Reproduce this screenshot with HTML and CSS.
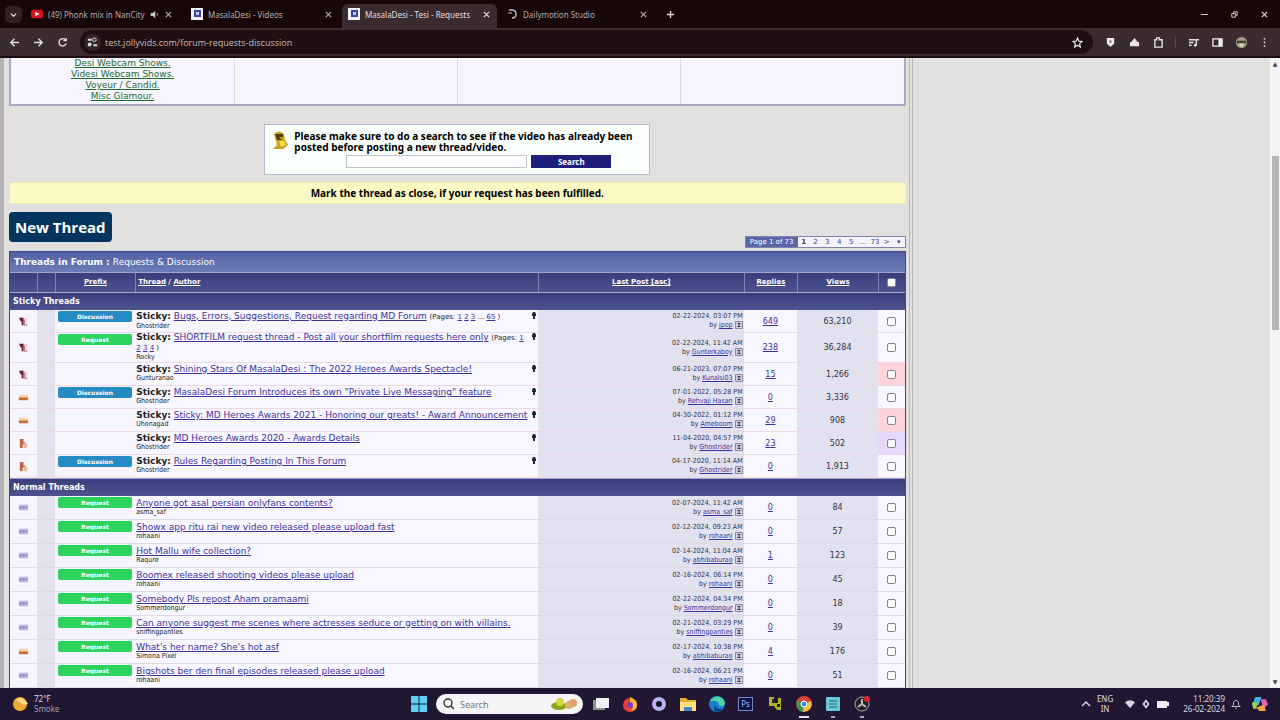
FILE: index.html
```html
<!DOCTYPE html>
<html lang="en">
<head>
    <meta charset="UTF-8">
    <meta name="viewport" content="width=device-width, initial-scale=1.0">
    <title>MasalaDesi - Tesi - Requests &amp; Discussion</title>
    <link rel="stylesheet" href="styles.css">
</head>
<body>

<!-- shared icons -->
<svg class="defs" aria-hidden="true">
    <symbol id="i-close" viewBox="0 0 10 10"><path d="M2 2l6 6M8 2l-6 6" stroke="currentColor" stroke-width="1.3"/></symbol>
    <symbol id="i-site" viewBox="0 0 12 12"><path fill="#f4f4ff" d="M0 0h12v12H0z"/><path fill="#3d45a0" d="M3 2h7v7H3z"/><path fill="#c9ccf0" d="M5 4h3v3H5z"/></symbol>
    <symbol id="i-hot" viewBox="0 0 12 12"><path fill="#f3d3da" d="M4 2h6v9H4z"/><path fill="#6d1f36" d="M1 2h5v4H4H3z"/><path fill="#6d1f36" d="M4 5h2v5H4z"/><path fill="none" stroke="#b06a80" d="M7 4v6h3"/></symbol>
    <symbol id="i-locked" viewBox="0 0 12 12"><path fill="#f5d3a4" d="M1 3h10v4H1z"/><path fill="#c96a35" d="M1 6h10v3H1z"/></symbol>
    <symbol id="i-old" viewBox="0 0 12 12"><path fill="#b9664c" d="M2 1h4v4h2v2H5v4H2z"/><path fill="#e8b79c" d="M6 6h4v5H6z"/></symbol>
    <symbol id="i-new" viewBox="0 0 12 12"><path fill="#bfb6e2" d="M1 3h10v6H1z"/><path stroke="#9589c8" d="M3 4v4M6 4v4M9 4v4M1 6h9"/></symbol>
    <symbol id="i-pin" viewBox="0 0 6 8"><path fill="#26243c" d="M2 0h2l1 2v2H4v3H2V4H1V2z"/></symbol>
    <symbol id="i-go" viewBox="0 0 8 8"><path fill="#d3d0e4" stroke="#8a87a6" d="M.5.5h7v7h-7z"/><path fill="#3c3958" d="M2 2h4L4 4l2 2H2l2-2z"/></symbol>
</svg>

<header class="browser">
    <div class="tabs">
        <button class="tab-list" aria-label="Search tabs"><svg viewBox="0 0 10 10"><path d="M2 4l3 3 3-3" fill="none" stroke="#ddd" stroke-width="1.4"/></svg></button>
        <div class="tab">
            <svg class="fav" viewBox="0 0 14 12"><rect y="1" width="14" height="10" rx="3" fill="#d5121d"/><path fill="#fff" d="M5 3.500l5 2.500-5 2.500z"/></svg>
            <span>(49) Phonk mix in NanCity</span>
            <svg class="x" viewBox="0 0 12 12"><path fill="#ccc" d="M1 4h3l3-3v10L4 8H1z"/><path d="M9 4q2 2 0 4" stroke="#ccc" fill="none"/></svg>
            <svg class="x"><use href="#i-close"/></svg>
        </div>
        <div class="tab">
            <svg class="fav"><use href="#i-site"/></svg>
            <span>MasalaDesi - Videos</span>
            <svg class="x"><use href="#i-close"/></svg>
        </div>
        <div class="tab active">
            <svg class="fav"><use href="#i-site"/></svg>
            <span>MasalaDesi - Tesi - Requests</span>
            <svg class="x"><use href="#i-close"/></svg>
        </div>
        <div class="tab">
            <svg class="fav" viewBox="0 0 12 12"><path d="M3 2h3q4 0 4 4t-4 4" fill="none" stroke="#bbb" stroke-width="1.400"/><path d="M2 5h4" stroke="#bbb"/></svg>
            <span>Dailymotion Studio</span>
            <svg class="x"><use href="#i-close"/></svg>
        </div>
        <button class="new-tab" aria-label="New tab"><svg viewBox="0 0 10 10"><path d="M5 1v8M1 5h8" stroke="#ddd" stroke-width="1.500"/></svg></button>
        <div class="window-buttons">
            <button aria-label="Minimize"><svg viewBox="0 0 10 10"><path d="M1 5h8" stroke="#ddd"/></svg></button>
            <button aria-label="Restore"><svg viewBox="0 0 10 10"><path d="M2 4h4v4H2zM4 4V2h4v4H6" fill="none" stroke="#ddd"/></svg></button>
            <button aria-label="Close"><svg><use href="#i-close"/></svg></button>
        </div>
    </div>
    <div class="toolbar">
        <button aria-label="Back"><svg viewBox="0 0 12 12"><path d="M11 6H2M6 2L2 6l4 4" fill="none" stroke="#ddd" stroke-width="1.500"/></svg></button>
        <button aria-label="Forward"><svg viewBox="0 0 12 12"><path d="M1 6h9M6 2l4 4-4 4" fill="none" stroke="#ddd" stroke-width="1.500"/></svg></button>
        <button aria-label="Reload"><svg viewBox="0 0 12 12"><path d="M10 7a4 4 0 1 1-1-4M10 1v3H7" fill="none" stroke="#ddd" stroke-width="1.500"/></svg></button>
        <div class="address">
            <span class="site-info"><svg viewBox="0 0 12 12"><path d="M1 3h4M7 9h4M1 9h3" stroke="#ddd" stroke-width="2"/><circle cx="8" cy="3" r="2" fill="none" stroke="#ddd"/><circle cx="3" cy="8" r="2" fill="#ddd"/></svg></span>
            <input type="text" aria-label="Address" value="test.jollyvids.com/forum-requests-discussion">
            <svg viewBox="0 0 12 12"><path d="M6 1l1.500 3.500 3.500.3-2.700 2.400.9 3.800L6 9l-3.200 2 .9-3.800L1 4.800l3.500-.3z" fill="none" stroke="#eee" stroke-width="1.200"/></svg>
        </div>
        <button aria-label="Shield"><svg viewBox="0 0 12 12"><path fill="#f2eeee" d="M2 1h8v6L6 11 2 7z"/><circle cx="6" cy="5" r="1.500" fill="#888"/></svg></button>
        <button aria-label="Extension"><svg viewBox="0 0 12 12"><path fill="#e9e3e3" d="M1 6l2-1 3-4 3 4 2 1v4H1z"/></svg></button>
        <button aria-label="Extensions"><svg viewBox="0 0 12 12"><path d="M2 3h2V1h3v2h3v8H2z" fill="none" stroke="#e9e3e3" stroke-width="1.500"/></svg></button>
        <span class="divider"></span>
        <button aria-label="Media"><svg viewBox="0 0 12 12"><path d="M1 3h7M1 6h5M1 9h3M9 9V3h3" fill="none" stroke="#e9e3e3" stroke-width="1.500"/><circle cx="8" cy="9" r="1.500" fill="#e9e3e3"/></svg></button>
        <button aria-label="Side panel"><svg viewBox="0 0 12 12"><path d="M1 2h10v8H1z" fill="none" stroke="#eee" stroke-width="1.400"/><path fill="#eee" d="M7 2h4v8H7z"/></svg></button>
        <button aria-label="Profile"><svg viewBox="0 0 12 12"><circle cx="6" cy="6" r="6" fill="#a5a08c"/><path fill="#4a423a" d="M1 4h10v3H1z"/><path fill="#e3d5bd" d="M3 7h6l-2 4H5z"/></svg></button>
        <button class="slim" aria-label="Menu"><svg viewBox="0 0 12 12"><path d="M6 1v2M6 5v2M6 9v2" stroke="#ccc" stroke-width="1.600"/></svg></button>
    </div>
</header>

<div class="viewport">
<main class="forum">

    <div class="categories">
        <div class="category-links">
            <a href="#">Desi Webcam Shows.</a>
            <a href="#">Videsi Webcam Shows.</a>
            <a href="#">Voyeur / Candid.</a>
            <a href="#">Misc Glamour.</a>
        </div>
        <div></div>
        <div></div>
        <div></div>
    </div>

    <form class="search-box">
        <svg viewBox="0 0 16 18"><path fill="#caa51c" d="M2 3q5-5 10 0l1 6 3 5-5 4H1l4-4z"/><path fill="#4d4110" d="M3 3h8v3H7l3 3H5z"/><path fill="#f6dc52" d="M7 10h5l2 4-5 2z"/></svg>
        <div>
            <label for="q">Please make sure to do a search to see if the video has already been posted before posting a new thread/video.</label>
            <div class="search-row">
                <input type="text" id="q">
                <button type="button">Search</button>
            </div>
        </div>
    </form>

    <div class="notice">Mark the thread as close, if your request has been fulfilled.</div>

    <div class="actions">
        <button class="new-thread">New Thread</button>
        <nav class="pages">
            <span>Page 1 of 73</span>
            <b>1</b>
            <a href="#">2</a>
            <a href="#">3</a>
            <a href="#">4</a>
            <a href="#">5</a>
            <i>...</i>
            <a href="#">73</a>
            <a href="#">&gt;</a>
            <a href="#" class="drop">▾</a>
        </nav>
    </div>

    <div class="threads">
    <h2>Threads in Forum : <span>Requests &amp; Discussion</span></h2>
    <table>
        <colgroup>
            <col class="c-icon"><col class="c-blank"><col class="c-prefix"><col class="c-title"><col class="c-last"><col class="c-replies"><col class="c-views"><col class="c-check">
        </colgroup>
        <thead>
            <tr>
                <th></th>
                <th></th>
                <th><a href="#">Prefix</a></th>
                <th class="left"><a href="#">Thread</a> / <a href="#">Author</a></th>
                <th><a href="#">Last Post [asc]</a></th>
                <th><a href="#">Replies</a></th>
                <th><a href="#">Views</a></th>
                <th><input type="checkbox" aria-label="Select all"></th>
            </tr>
        </thead>
        <tbody class="sticky">
            <tr class="group"><th colspan="8">Sticky Threads</th></tr>
            <tr>
                <td><svg><use href="#i-hot"/></svg></td><td></td>
                <td><span class="prefix discussion">Discussion</span></td>
                <td><svg class="pin"><use href="#i-pin"/></svg><b>Sticky:</b> <a href="#">Bugs, Errors, Suggestions, Request regarding MD Forum</a> <small>(Pages: <a href="#">1</a> <a href="#">2</a> <a href="#">3</a> ... <a href="#">65</a> )</small><p>Ghostrider</p></td>
                <td>02-22-2024, 03:07 PM<p>by <a href="#">jpop</a> <svg><use href="#i-go"/></svg></p></td>
                <td><a href="#">649</a></td><td>63,210</td>
                <td><input type="checkbox" aria-label="Select thread"></td>
            </tr>
            <tr class="tall">
                <td><svg><use href="#i-hot"/></svg></td><td></td>
                <td><span class="prefix request">Request</span></td>
                <td><svg class="pin"><use href="#i-pin"/></svg><b>Sticky:</b> <a href="#">SHORTFILM request thread - Post all your shortfilm requests here only</a> <small>(Pages: <a href="#">1</a><br><a href="#">2</a> <a href="#">3</a> <a href="#">4</a> )</small><p>Rocky</p></td>
                <td>02-22-2024, 11:42 AM<p>by <a href="#">Gunterkaboy</a> <svg><use href="#i-go"/></svg></p></td>
                <td><a href="#">238</a></td><td>36,284</td>
                <td><input type="checkbox" aria-label="Select thread"></td>
            </tr>
            <tr>
                <td><svg><use href="#i-hot"/></svg></td><td></td>
                <td></td>
                <td><svg class="pin"><use href="#i-pin"/></svg><b>Sticky:</b> <a href="#">Shining Stars Of MasalaDesi : The 2022 Heroes Awards Spectacle!</a><p>Gunturanao</p></td>
                <td>06-21-2023, 07:07 PM<p>by <a href="#">Kunalsi03</a> <svg><use href="#i-go"/></svg></p></td>
                <td><a href="#">15</a></td><td>1,266</td>
                <td class="pink"><input type="checkbox" aria-label="Select thread"></td>
            </tr>
            <tr>
                <td><svg><use href="#i-locked"/></svg></td><td></td>
                <td><span class="prefix discussion">Discussion</span></td>
                <td><svg class="pin"><use href="#i-pin"/></svg><b>Sticky:</b> <a href="#">MasalaDesi Forum Introduces its own "Private Live Messaging" feature</a><p>Ghostrider</p></td>
                <td>07-01-2022, 05:28 PM<p>by <a href="#">Rehvaji Hasan</a> <svg><use href="#i-go"/></svg></p></td>
                <td><a href="#">0</a></td><td>3,336</td>
                <td><input type="checkbox" aria-label="Select thread"></td>
            </tr>
            <tr>
                <td><svg><use href="#i-locked"/></svg></td><td></td>
                <td></td>
                <td><svg class="pin"><use href="#i-pin"/></svg><b>Sticky:</b> <a href="#">Sticky: MD Heroes Awards 2021 - Honoring our greats! - Award Announcement</a><p>Uhonagad</p></td>
                <td>04-30-2022, 01:12 PM<p>by <a href="#">Ameboom</a> <svg><use href="#i-go"/></svg></p></td>
                <td><a href="#">29</a></td><td>908</td>
                <td class="pink"><input type="checkbox" aria-label="Select thread"></td>
            </tr>
            <tr>
                <td><svg><use href="#i-old"/></svg></td><td></td>
                <td></td>
                <td><svg class="pin"><use href="#i-pin"/></svg><b>Sticky:</b> <a href="#">MD Heroes Awards 2020 - Awards Details</a><p>Ghostrider</p></td>
                <td>11-04-2020, 04:57 PM<p>by <a href="#">Ghostrider</a> <svg><use href="#i-go"/></svg></p></td>
                <td><a href="#">23</a></td><td>502</td>
                <td class="violet"><input type="checkbox" aria-label="Select thread"></td>
            </tr>
            <tr>
                <td><svg><use href="#i-old"/></svg></td><td></td>
                <td><span class="prefix discussion">Discussion</span></td>
                <td><svg class="pin"><use href="#i-pin"/></svg><b>Sticky:</b> <a href="#">Rules Regarding Posting In This Forum</a><p>Ghostrider</p></td>
                <td>04-17-2020, 11:14 AM<p>by <a href="#">Ghostrider</a> <svg><use href="#i-go"/></svg></p></td>
                <td><a href="#">0</a></td><td>1,913</td>
                <td><input type="checkbox" aria-label="Select thread"></td>
            </tr>
        </tbody>
        <tbody class="normal">
            <tr class="group"><th colspan="8">Normal Threads</th></tr>
            <tr>
                <td><svg><use href="#i-new"/></svg></td><td></td>
                <td><span class="prefix request">Request</span></td>
                <td><a href="#">Anyone got asal persian onlyfans contents?</a><p>asma_saf</p></td>
                <td>02-07-2024, 11:42 AM<p>by <a href="#">asma_saf</a> <svg><use href="#i-go"/></svg></p></td>
                <td><a href="#">0</a></td><td>84</td>
                <td><input type="checkbox" aria-label="Select thread"></td>
            </tr>
            <tr>
                <td><svg><use href="#i-new"/></svg></td><td></td>
                <td><span class="prefix request">Request</span></td>
                <td><a href="#">Showx app ritu rai new video released please upload fast</a><p>rohaani</p></td>
                <td>02-12-2024, 09:23 AM<p>by <a href="#">rohaani</a> <svg><use href="#i-go"/></svg></p></td>
                <td><a href="#">0</a></td><td>57</td>
                <td><input type="checkbox" aria-label="Select thread"></td>
            </tr>
            <tr>
                <td><svg><use href="#i-new"/></svg></td><td></td>
                <td><span class="prefix request">Request</span></td>
                <td><a href="#">Hot Mallu wife collection?</a><p>Raqure</p></td>
                <td>02-14-2024, 11:04 AM<p>by <a href="#">abhibaburao</a> <svg><use href="#i-go"/></svg></p></td>
                <td><a href="#">1</a></td><td>123</td>
                <td><input type="checkbox" aria-label="Select thread"></td>
            </tr>
            <tr>
                <td><svg><use href="#i-new"/></svg></td><td></td>
                <td><span class="prefix request">Request</span></td>
                <td><a href="#">Boomex released shooting videos please upload</a><p>rohaani</p></td>
                <td>02-16-2024, 06:14 PM<p>by <a href="#">rohaani</a> <svg><use href="#i-go"/></svg></p></td>
                <td><a href="#">0</a></td><td>45</td>
                <td><input type="checkbox" aria-label="Select thread"></td>
            </tr>
            <tr>
                <td><svg><use href="#i-new"/></svg></td><td></td>
                <td><span class="prefix request">Request</span></td>
                <td><a href="#">Somebody Pls repost Aham pramaami</a><p>Sommerdongur</p></td>
                <td>02-22-2024, 04:34 PM<p>by <a href="#">Sommerdongur</a> <svg><use href="#i-go"/></svg></p></td>
                <td><a href="#">0</a></td><td>18</td>
                <td><input type="checkbox" aria-label="Select thread"></td>
            </tr>
            <tr>
                <td><svg><use href="#i-new"/></svg></td><td></td>
                <td><span class="prefix request">Request</span></td>
                <td><a href="#">Can anyone suggest me scenes where actresses seduce or getting on with villains.</a><p>sniffingpanties</p></td>
                <td>02-21-2024, 03:29 PM<p>by <a href="#">sniffingpanties</a> <svg><use href="#i-go"/></svg></p></td>
                <td><a href="#">0</a></td><td>39</td>
                <td><input type="checkbox" aria-label="Select thread"></td>
            </tr>
            <tr>
                <td><svg><use href="#i-locked"/></svg></td><td></td>
                <td><span class="prefix request">Request</span></td>
                <td><a href="#">What's her name? She's hot asf</a><p>Simona Pixel</p></td>
                <td>02-17-2024, 10:38 PM<p>by <a href="#">abhibaburao</a> <svg><use href="#i-go"/></svg></p></td>
                <td><a href="#">4</a></td><td>176</td>
                <td><input type="checkbox" aria-label="Select thread"></td>
            </tr>
            <tr>
                <td><svg><use href="#i-new"/></svg></td><td></td>
                <td><span class="prefix request">Request</span></td>
                <td><a href="#">Bigshots ber den final episodes released please upload</a><p>rohaani</p></td>
                <td>02-16-2024, 06:21 PM<p>by <a href="#">rohaani</a> <svg><use href="#i-go"/></svg></p></td>
                <td><a href="#">0</a></td><td>51</td>
                <td><input type="checkbox" aria-label="Select thread"></td>
            </tr>
        </tbody>
    </table>
    </div>

</main>
<div class="scrollbar"><span>▲</span><div class="thumb"></div><span>▼</span></div>
</div>

<footer class="taskbar">
    <div class="weather">
        <svg viewBox="0 0 16 16"><circle cx="8" cy="8" r="7" fill="#f2a931"/><path fill="#ffd98a" d="M4 4q5-4 8 0 3 1 4 4l-4 1z"/></svg>
        <div>72°F<br><span>Smoke</span></div>
    </div>
    <div class="apps">
        <button aria-label="Start"><svg viewBox="0 0 16 16"><path fill="#5fd0f5" d="M0 0h7.500v7.500H0zM8.500 0H16v7.500H8.500zM0 8.500h7.500V16H0zM8.500 8.500H16V16H8.500z"/></svg></button>
        <div class="task-search">
            <svg viewBox="0 0 12 12"><circle cx="6" cy="5" r="4" fill="none" stroke="#333" stroke-width="1.400"/><path d="M9 8l3 3" stroke="#333" stroke-width="1.400"/></svg>
            <input type="text" placeholder="Search" aria-label="Search Windows">
            <svg class="doodle" viewBox="0 0 26 14"><ellipse cx="8" cy="9" rx="8" ry="4" fill="#8fa51e"/><circle cx="9" cy="5" r="4" fill="#d4d83a"/><circle cx="18" cy="8" r="4" fill="#d9b56c"/><circle cx="22" cy="6" r="4" fill="#e6a06e"/></svg>
        </div>
        <button aria-label="Task view"><svg viewBox="0 0 16 16"><path fill="#8d8d92" d="M0 4h4v10H0zM4 12h8v2H4z"/><path fill="#f0f0f0" d="M3 2h13v10H3z"/></svg></button>
        <button aria-label="Firefox"><svg viewBox="0 0 16 16"><circle cx="8" cy="9" r="7" fill="#ea3e36"/><path fill="#ffb72c" d="M8 1q8 3 7 9-1 5-6 5 4-5-1-7z"/><circle cx="8" cy="9" r="3" fill="#7b3bd6"/></svg></button>
        <button aria-label="Browser"><svg viewBox="0 0 16 16"><circle cx="8" cy="8" r="5" fill="#15122e" stroke="#b5b4ee" stroke-width="4"/></svg></button>
        <button aria-label="Files"><svg viewBox="0 0 16 16"><path fill="#e5b330" d="M0 2h6l2 2h8v11H0z"/><path fill="#ffe27a" d="M0 6h16v9H0z"/><path fill="#3f86ce" d="M4 11h8v4H4z"/></svg></button>
        <button aria-label="Edge"><svg viewBox="0 0 16 16"><circle cx="8" cy="8" r="8" fill="#1a7fd0"/><path fill="#4fd6a0" d="M1 5q4-6 10-4 5 2 5 7-3 4-6 1 0-5-9-4z"/><path fill="#123f86" d="M6 8q0 6 8 5-5 5-9 1z"/></svg></button>
        <button aria-label="Photoshop"><span class="ps">Ps</span></button>
        <button aria-label="Cleaner"><svg viewBox="0 0 16 16"><path fill="#b5b02c" d="M2 1h5v6h4V2h3v12h-4l-3-4H2z"/><path fill="#20210c" d="M5 3h3v4H5zM10 8h3v3h-3z"/></svg></button>
        <button class="open current" aria-label="Chrome"><svg viewBox="0 0 16 16"><circle cx="8" cy="8" r="8" fill="#d94235"/><path fill="#3b9b4e" d="M1 4l7 4-1 8q-8-2-6-12z"/><path fill="#f3c53c" d="M8 8l7-3q3 9-8 11z"/><circle cx="8" cy="8" r="3" fill="#4a83e6" stroke="#fff"/></svg></button>
        <button class="open" aria-label="Notepad"><svg viewBox="0 0 16 16"><path fill="#66cbd8" d="M1 1h14v14H1z"/><path stroke="#24687c" d="M4 5h8M4 8h8M4 11h8"/></svg></button>
        <button class="open" aria-label="Recorder"><svg viewBox="0 0 16 16"><circle cx="8" cy="8" r="7" fill="#222" stroke="#aaa"/><path d="M8 8V3M8 8l4 3M8 8l-4 3" stroke="#bbb" stroke-width="2"/><circle cx="13" cy="3" r="3" fill="#e0202c"/></svg></button>
    </div>
    <div class="tray">
        <svg viewBox="0 0 10 10"><path d="M1 7l4-4 4 4" fill="none" stroke="#ddd" stroke-width="1.400"/></svg>
        <div class="lang">ENG<br>IN</div>
        <svg viewBox="0 0 12 12"><path fill="#d8d5e2" d="M0 4q6-5 12 0L6 11z"/></svg>
        <svg viewBox="0 0 12 12"><path fill="none" stroke="#d8d5e2" stroke-width="2" d="M6 2l3 4-3 4-3-4z"/></svg>
        <svg class="battery" viewBox="0 0 12 12"><path fill="#f0eef5" d="M0 3h10v1h2v4h-2v2H0z"/></svg>
        <div class="clock">11:20:39<br>26-02-2024</div>
        <svg viewBox="0 0 12 12"><path d="M1 9h10L9 7V4Q6-1 3 4v3zM5 11h2" fill="none" stroke="#ddd"/></svg>
        <svg class="copilot" viewBox="0 0 16 16"><path fill="#39b7e8" d="M4 1h6L7 9H1z"/><path fill="#9cd44a" d="M1 6h5l-1 6H2z"/><path fill="#e660b8" d="M9 3h5l2 5-4 4z"/><path fill="#f5a742" d="M5 11l7-3 2 6H8z"/></svg>
    </div>
</footer>

</body>
</html>
```
FILE: styles.css
```css
* {
    box-sizing: border-box;
}
body {
    margin: 0;
    height: 100vh;
    display: flex;
    flex-direction: column;
    overflow: hidden;
    font-family: "DejaVu Sans", Verdana, sans-serif;
    font-size: 9px;
    background-color: #e1e0df;
}
button {
    border: 0;
    padding: 0;
    background: none;
    color: inherit;
    font-family: inherit;
}
svg {
    display: block;
    flex: none;
}
.defs {
    position: absolute;
    width: 0;
    height: 0;
}

/* browser */
.browser {
    background-color: #170708;
    color: #b5acad;
    font-family: "Noto Sans", sans-serif;
    font-size: 8px;
}
.tabs {
    display: flex;
    align-items: center;
    height: 28px;
    padding-left: 5px;
}
.tabs svg {
    width: 9px;
    height: 9px;
}
.tab-list {
    width: 17px;
    height: 17px;
    padding: 4px;
    border-radius: 5px;
    background-color: #302224;
}
.tab {
    display: flex;
    align-items: center;
    gap: 5px;
    width: 160px;
    height: 28px;
    padding: 0 9px;
    color: #b5acad;
}
.tab span {
    flex: 1;
    white-space: nowrap;
}
.tab .fav {
    width: 12px;
    height: 12px;
}
.tab.active {
    height: 24px;
    margin-top: 4px;
    width: 155px;
    padding: 0 6px 4px;
    border-radius: 6px 6px 0 0;
    background-color: #392b2e;
    color: #e6dfe0;
}
.new-tab {
    width: 26px;
    padding-left: 9px;
}
.window-buttons {
    margin-left: auto;
    display: flex;
    color: #ddd;
}
.window-buttons button {
    width: 30px;
    padding-left: 10px;
}
.toolbar {
    display: flex;
    align-items: center;
    height: 30px;
    padding: 0 5px 0 2px;
    background-color: #392b2e;
    border-bottom: 2px solid #1c0c0f;
}
.toolbar svg {
    width: 11px;
    height: 11px;
}
.toolbar button {
    display: grid;
    place-items: center;
    width: 24px;
    height: 24px;
}
.toolbar .slim {
    width: 22px;
}
.divider {
    width: 1px;
    height: 10px;
    margin: 0 5px;
    background-color: #5c4a4e;
}
.address {
    flex: 1;
    display: flex;
    align-items: center;
    height: 24px;
    margin: 0 5px 0 6px;
    padding: 0 10px 0 4px;
    border-radius: 12px;
    background-color: #1f0f12;
}
.site-info {
    padding: 3px;
    border-radius: 50%;
    background-color: #33262a;
}
.address input {
    flex: 1;
    padding: 0 4px;
    border: 0;
    background: none;
    color: #c5bdbe;
    font: 9px "Open Sans", sans-serif;
}

/* page */
.viewport {
    flex: 1;
    min-height: 0;
    display: flex;
    overflow: hidden;
}
.forum {
    width: 71.3%;
    padding: 0 3px 0 5px;
    border-left: 4px solid #b5b1b6;
    border-right: 4px double #b9b5bf;
    overflow: hidden;
}
.scrollbar {
    width: 10px;
    margin-left: auto;
    display: flex;
    flex-direction: column;
    align-items: center;
    background-color: #f5f4f4;
    font-size: 6px;
    line-height: 12px;
    color: #444;
}
.thumb {
    width: 7px;
    height: 174px;
    margin: 86px 0 auto;
    background-color: #b7b6b7;
}
.categories {
    display: grid;
    grid-template-columns: repeat(4, 1fr);
    border: 2px solid #aba7c0;
    border-top: 0;
    background-color: #f6f4fd;
}
.categories > div + div {
    border-left: 1px solid #dddbe6;
}
.category-links {
    display: flex;
    flex-direction: column;
    align-items: center;
    padding-bottom: 2px;
    line-height: 11px;
}
.category-links a {
    color: #1f6b2a;
}
.search-box {
    display: flex;
    gap: 6px;
    width: 386px;
    margin: 18px auto 7px;
    padding: 6px 7px;
    border: 1px solid #b5b9ce;
    background-color: #fafffb;
    font: bold 10px/11px "Noto Sans", sans-serif;
}
.search-box svg {
    width: 16px;
    height: 18px;
}
.search-box > div {
    flex: 1;
}
.search-row {
    display: flex;
    gap: 4px;
    margin-top: 2px;
    padding-left: 52px;
}
.search-row input {
    width: 181px;
    height: 13px;
    border: 1px solid #c3c3cf;
    background-color: #fff;
}
.search-row button {
    width: 80px;
    height: 13px;
    background-color: #1d1d7a;
    color: #fff;
    font-size: 8px;
    font-weight: bold;
    line-height: 11px;
}
.notice {
    padding: 4px;
    border: 1px solid #eeeab8;
    border-radius: 2px;
    background-color: #fdf9c3;
    font: bold 10px/12px "Noto Sans", sans-serif;
    text-align: center;
}
.actions {
    display: flex;
    justify-content: space-between;
    align-items: flex-end;
    margin: 8px 0 3px;
}
.new-thread {
    padding: 0 6px;
    margin-bottom: 6px;
    height: 30px;
    border-radius: 4px;
    background-color: #04355f;
    color: #fff;
    font: bold 15px "Open Sans", sans-serif;
}
.pages {
    display: flex;
    width: 161px;
    border: 1px solid #8583ae;
    background-color: #f4f2fb;
    font-size: 7px;
    line-height: 10px;
    text-align: center;
}
.pages > * {
    flex: 1;
    color: #44416b;
    text-decoration: none;
}
.pages span {
    flex: none;
    width: 52px;
    background-color: #5966a8;
    color: #fff;
}

/* thread list */
.threads {
    border: 1px solid #3d4583;
}
.threads h2 {
    margin: 0;
    padding: 0 4px;
    background: linear-gradient(#5560a4, #6d7cb8);
    color: #fff;
    font-size: 9px;
    line-height: 20px;
}
.threads h2 span {
    font-weight: normal;
}
table {
    width: 100%;
    table-layout: fixed;
    border-spacing: 0;
    background-color: #f6f4fd;
    line-height: 9px;
}
.c-icon { width: 3%; }
.c-blank { width: 2%; }
.c-prefix { width: 9%; }
.c-title { width: 45%; }
.c-last { width: 23%; }
.c-replies { width: 6%; }
.c-views { width: 9%; }
.c-check { width: 3%; }
th {
    height: 20px;
    padding: 0 2px;
    border-top: 1px solid #a2a6cc;
    border-left: 1px solid #8084b4;
    background: linear-gradient(#383d7c, #4d5391);
    color: #fff;
    font-size: 7px;
}
th:first-child {
    border-left: 0;
}
th a {
    color: #fff;
}
th.left {
    text-align: left;
}
.group th {
    height: 18px;
    padding: 0 3px;
    font-size: 8px;
    text-align: left;
}
td {
    height: 24px;
    padding: 0 1px;
    border-bottom: 1px solid #dedbe8;
    color: #33313f;
    font-size: 8px;
    text-align: center;
}
.sticky td {
    height: 23px;
    border-bottom-color: #ebd9e5;
}
.sticky .tall td {
    height: 30px;
}
td:nth-child(even) {
    background-color: #e2e1f0;
}
td:nth-child(4),
td:nth-child(6),
td:nth-child(8) {
    background-color: #f8f6fe;
}
td:nth-child(5),
td:nth-child(7) {
    background-color: #e2e1f0;
}
td a {
    color: #3f329a;
}
td p {
    margin: 0;
}
td:first-child svg {
    width: 11px;
    height: 11px;
    margin: 0 auto;
}
td:nth-child(3) {
    padding: 1px 3px;
    vertical-align: top;
}
td:nth-child(4) {
    color: #222;
    font-size: 9px;
    text-align: left;
    white-space: nowrap;
}
td:nth-child(4) p {
    font: 7px/9px "DejaVu Sans Condensed", "DejaVu Sans", sans-serif;
}
td small {
    font-size: 7px;
}
td:nth-child(5) {
    font: 7px/9px "DejaVu Sans Condensed", "DejaVu Sans", sans-serif;
    text-align: right;
}
td:nth-child(5) svg {
    display: inline-block;
    width: 8px;
    height: 8px;
    vertical-align: middle;
}
td.pink:last-child {
    background-color: #ffd3dc;
}
td.violet:last-child {
    background-color: #e6d8fb;
}
.pin {
    float: right;
    width: 6px;
    height: 8px;
}
.prefix {
    display: block;
    border-radius: 2px;
    color: #fff;
    font-size: 6px;
    font-weight: bold;
    line-height: 11px;
}
.discussion {
    background-color: #258bc4;
}
.request {
    background-color: #2cd45e;
}
.threads input {
    display: block;
    appearance: none;
    width: 9px;
    height: 9px;
    margin: 0 auto;
    border: 1px solid #85838f;
    border-radius: 2px;
    background-color: #fff;
}

/* taskbar */
.taskbar {
    display: grid;
    grid-template-columns: 1fr auto 1fr;
    align-items: center;
    height: 32px;
    padding: 0 12px;
    background-color: #211733;
    color: #dedae6;
    font-family: "Noto Sans", sans-serif;
    font-size: 8px;
    line-height: 10px;
}
.weather,
.apps,
.tray {
    display: flex;
    align-items: center;
}
.weather {
    gap: 6px;
}
.weather span {
    color: #a59fb2;
}
.weather svg {
    width: 16px;
    height: 16px;
}
.apps button {
    display: grid;
    place-items: center;
    width: 29px;
    height: 32px;
}
.apps button svg {
    width: 16px;
    height: 16px;
}
.open {
    position: relative;
}
.open::after {
    content: "";
    position: absolute;
    bottom: 2px;
    width: 4px;
    height: 2px;
    background-color: #aaa5b5;
}
.current::after {
    width: 10px;
    background-color: #e4e0ec;
}
.ps {
    width: 15px;
    border: 1px solid #7d86c8;
    background-color: #0d1440;
    color: #a9b4ff;
    font-size: 8px;
    line-height: 12px;
}
.task-search {
    display: flex;
    align-items: center;
    width: 147px;
    height: 20px;
    margin: 0 3px;
    padding: 0 6px;
    border-radius: 10px;
    background-color: #f5f4f6;
}
.task-search svg {
    width: 12px;
    height: 12px;
}
.task-search .doodle {
    width: 26px;
    height: 14px;
}
.task-search input {
    flex: 1;
    min-width: 0;
    padding: 0 6px;
    border: 0;
    background: none;
    font: 9px "Noto Sans", sans-serif;
}
.tray {
    justify-content: flex-end;
    gap: 6px;
}
.tray svg {
    width: 10px;
    height: 10px;
}
.tray .battery {
    width: 12px;
    height: 12px;
}
.tray .copilot {
    width: 17px;
    height: 17px;
    margin-left: 4px;
}
.lang {
    margin: 0 6px 0 0;
    text-align: center;
}
.clock {
    margin-left: 8px;
    text-align: right;
}
```
